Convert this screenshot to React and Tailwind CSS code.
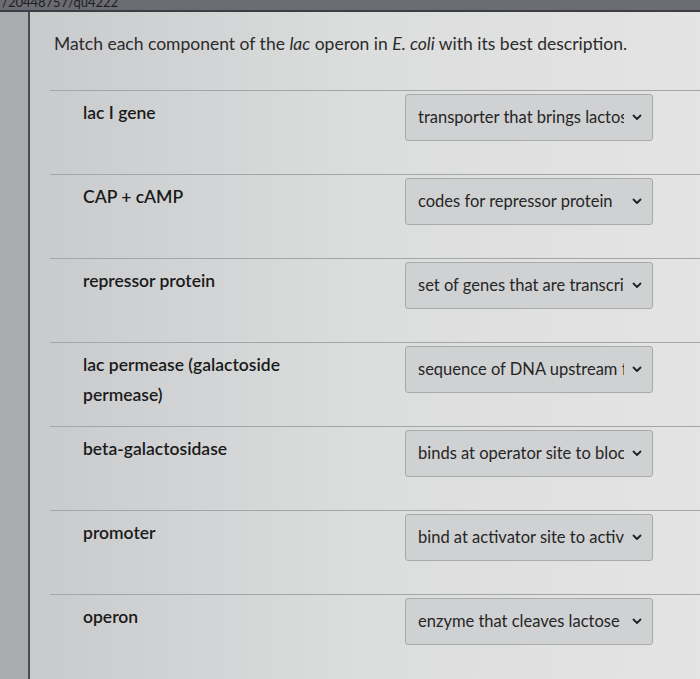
import { useState } from "react";

const rows = [
  { term: "lac I gene", answer: "transporter that brings lactose into the cell" },
  { term: "CAP + cAMP", answer: "codes for repressor protein" },
  { term: "repressor protein", answer: "set of genes that are transcribed together" },
  { term: "lac permease (galactoside permease)", answer: "sequence of DNA upstream from the genes" },
  { term: "beta-galactosidase", answer: "binds at operator site to block transcription" },
  { term: "promoter", answer: "bind at activator site to activate transcription" },
  { term: "operon", answer: "enzyme that cleaves lactose into glucose and galactose" },
];

// select box with a clipped value and a chevron
const AnswerSelect = ({ value }) => (
  <div className="mt-[3px] flex h-[47px] w-[248px] items-center rounded-[3px] border border-[#a9aaab] bg-[#d0d1d2] pl-[12px] pr-[10px]">
    <span className="flex-1 overflow-hidden whitespace-nowrap text-[16.5px] text-[#262626]">
      {value}
    </span>
    <svg width="10" height="7" viewBox="0 0 10 7" className="ml-[8px] shrink-0">
      <path d="M1.5 1.5 L5 5 L8.5 1.5" fill="none" stroke="#222" strokeWidth="1.8" strokeLinecap="round" strokeLinejoin="round" />
    </svg>
  </div>
);

const App = () => {
  const [answers] = useState(rows);

  return (
    <div
      className="flex h-[679px] w-[700px] flex-col overflow-hidden bg-[#d9dadb]"
      style={{ fontFamily: "Lato, 'Open Sans', sans-serif" }}
    >
      {/* browser address strip */}
      <div className="h-[12px] overflow-hidden border-b-2 border-[#3d3d44] bg-[#6a6b73]">
        <div className="-mt-[6px] pl-[2px] text-[13px] leading-[16px] text-[#1e1e24]">
          /20448757/qu4222
        </div>
      </div>

      <div className="flex flex-1">
        <div className="w-[30px] shrink-0 border-r-2 border-[#4b4c50] bg-[#abacb0]" />

        <div className="flex-1 bg-gradient-to-r from-[#c9cacc] via-[#dcdddd] to-[#e4e4e4]">
          <p className="pl-[24px] pt-[19px] text-[17.5px] leading-[26px] text-[#2b2b2b]">
            Match each component of the <i>lac</i> operon in <i>E. coli</i> with its best description.
          </p>

          <div className="ml-[20px] mt-[33px]">
            {answers.map((row) => (
              <div
                key={row.term}
                className="grid h-[84px] grid-cols-[322px_248px] border-t border-[#a4a5a7] pl-[33px]"
              >
                <div className="max-w-[230px] pt-[7px] text-[17.5px] font-semibold leading-[30px] text-[#1a1a1a]">
                  {row.term}
                </div>
                <AnswerSelect value={row.answer} />
              </div>
            ))}
          </div>
        </div>
      </div>
    </div>
  );
};

export default App;
